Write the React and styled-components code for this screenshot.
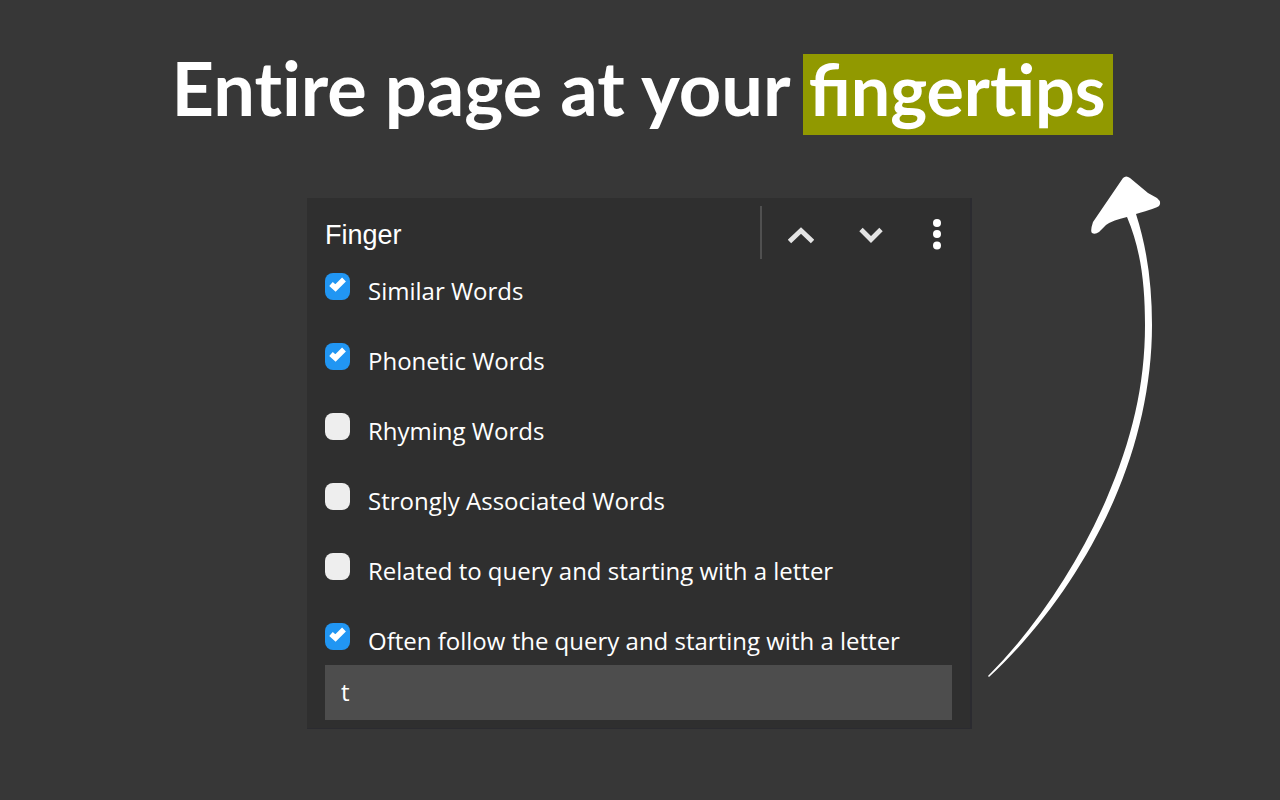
import React, { useState } from "react";
import styled, { createGlobalStyle } from "styled-components";

const GlobalStyle = createGlobalStyle`
  * { box-sizing: border-box; }
  body { margin: 0; background: #373737; }
`;

const Page = styled.main`
  min-height: 100vh;
  padding: 52px 0 48px;
  background: #373737;
  color: #fff;
`;

const Heading = styled.h1`
  display: flex;
  justify-content: center;
  align-items: baseline;
  gap: 12px;
  margin: 0 0 41px;
  padding-left: 4px;
  font: 700 74px/71px Lato, "Open Sans", sans-serif;
  white-space: nowrap;
`;

const Lead = styled.span`
  font-variant-ligatures: none;
`;

const Highlight = styled.span`
  padding: 0 7px 10px 6px;
  background: #919900;
  font-size: 70px;
`;

const Stage = styled.div`
  display: grid;
  grid-template-columns: 1fr minmax(auto, 665px) 1fr;
  align-items: start;
  padding-right: 1px;
`;

const Panel = styled.form`
  grid-column: 2;
  margin-top: 22px;
  padding-bottom: 8px;
  background: #2f2f2f;
  border-right: 2px solid #2b2b30;
  border-bottom: 1px solid #2b2b30;
`;

const SearchBar = styled.div`
  display: flex;
  align-items: center;
  height: 74px;
  padding: 0 2px 0 18px;
`;

const SearchInput = styled.input`
  flex: 1;
  min-width: 0;
  padding: 0;
  border: 0;
  outline: 0;
  background: transparent;
  color: #fff;
  font: 27px/36px "Liberation Sans", Arial, sans-serif;
`;

const Divider = styled.span`
  width: 2px;
  height: 53px;
  margin: 0 4px 6px 0;
  background: #505050;
`;

const IconButton = styled.button`
  display: flex;
  justify-content: center;
  align-items: center;
  width: ${(p) => (p.$narrow ? 62 : 70)}px;
  height: 54px;
  padding: 0;
  border: 0;
  background: transparent;
  color: ${(p) => (p.$narrow ? "#fff" : "#e4e4e4")};
`;

const Options = styled.div`
  display: flex;
  flex-direction: column;
  gap: 32px;
  padding: 0 18px;
`;

const Option = styled.label`
  display: flex;
  align-items: flex-start;
  gap: 18px;
  font: 24px/38px "Open Sans", "Noto Sans", sans-serif;
  white-space: nowrap;
`;

const Box = styled.span`
  display: grid;
  width: 25px;
  height: 27px;
  margin-top: 1px;
`;

const Checkbox = styled.input`
  grid-area: 1 / 1;
  appearance: none;
  width: 25px;
  height: 27px;
  margin: 0;
  border-radius: 8px;
  background: #eee;
  &:checked { background: #2196f3; }
  &:checked + svg { visibility: visible; }
`;

const Tick = styled.svg`
  grid-area: 1 / 1;
  visibility: hidden;
  pointer-events: none;
`;

const LetterInput = styled.input`
  display: block;
  width: calc(100% - 36px);
  height: 55px;
  margin: 5px 18px 0;
  padding: 0 16px 2px;
  border: 0;
  outline: 0;
  background: #4d4d4d;
  color: #fff;
  font: 24px/38px "Open Sans", "Noto Sans", sans-serif;
`;

const Arrow = styled.svg`
  grid-column: 3;
  grid-row: 1;
`;

const options = [
  ["Similar Words", true],
  ["Phonetic Words", true],
  ["Rhyming Words", false],
  ["Strongly Associated Words", false],
  ["Related to query and starting with a letter", false],
  ["Often follow the query and starting with a letter", true],
];

function Choice({ text, initial }) {
  const [on, setOn] = useState(initial);
  return (
    <Option>
      <Box>
        <Checkbox type="checkbox" checked={on} onChange={() => setOn(!on)} />
        <Tick width="25" height="27" viewBox="0 0 25 27" aria-hidden="true">
          <path d="M6 11 10.5 15 19 6.5" fill="none" stroke="#fff" strokeWidth="5.4" />
        </Tick>
      </Box>
      <span>{text}</span>
    </Option>
  );
}

export default function App() {
  return (
    <Page>
      <GlobalStyle />
      <Heading>
        <Lead>Entire page at your</Lead>
        <Highlight>fingertips</Highlight>
      </Heading>
      <Stage>
        <Panel onSubmit={(e) => e.preventDefault()}>
          <SearchBar>
            <SearchInput aria-label="Search" defaultValue="Finger" />
            <Divider />
            <IconButton type="button" aria-label="Previous">
              <svg width="26" height="18" viewBox="0 0 26 18">
                <path d="M1.5 15.5 13 4.5 24.5 15.5" fill="none" stroke="currentColor" strokeWidth="4.8" />
              </svg>
            </IconButton>
            <IconButton type="button" aria-label="Next">
              <svg width="26" height="18" viewBox="0 0 26 18">
                <path d="M3 3.5 13 13.5 23 3.5" fill="none" stroke="currentColor" strokeWidth="4.8" />
              </svg>
            </IconButton>
            <IconButton type="button" aria-label="More options" $narrow>
              <svg width="10" height="32" viewBox="0 0 10 32" fill="currentColor">
                <circle cx="5" cy="4" r="4" />
                <circle cx="5" cy="15" r="4" />
                <circle cx="5" cy="26.5" r="4" />
              </svg>
            </IconButton>
          </SearchBar>
          <Options>
            {options.map(([text, initial]) => (
              <Choice key={text} text={text} initial={initial} />
            ))}
          </Options>
          <LetterInput aria-label="Starting letter" defaultValue="t" />
        </Panel>
        <Arrow width="200" height="504" viewBox="972 176 200 504" fill="#fff" aria-hidden="true">
          <path d="M1123 178 Q1126 175 1130 178 L1148 193 L1157 198 Q1162 202 1159 206 Q1157 208 1136 214 C1147 248 1152 285 1152 325 C1152 385 1138 445 1114 500 C1086 564 1042 628 989 677 L988 676 C1036 628 1078 564 1106 500 C1132 440 1145 385 1145 325 C1145 285 1141 250 1127 217 Q1113 220 1106 225 L1099 232 Q1095 235 1092 233 Q1090 231 1093 222 Z" />
        </Arrow>
      </Stage>
    </Page>
  );
}
